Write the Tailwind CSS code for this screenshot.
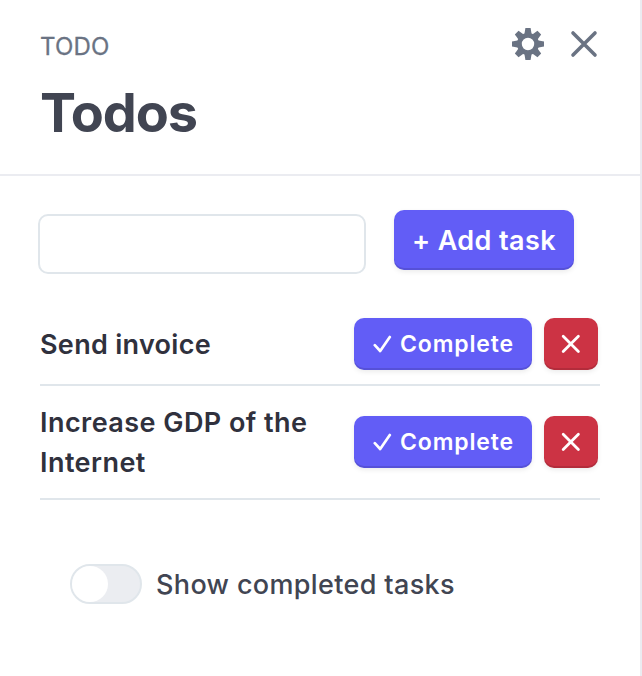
<!DOCTYPE html>
<html lang="en">
<head>
<meta charset="utf-8">
<title>Todos</title>
<script src="https://cdn.jsdelivr.net/npm/@tailwindcss/browser@4"></script>
</head>
<body class="bg-white">
<main class="h-[676px] w-[642px] overflow-hidden border-r-2 border-[#ebecf1] bg-white font-['Inter',sans-serif] text-[#30313d]">
  <header class="h-[176px] border-b-2 border-[#ebecf1] px-10 pt-[26px]">
    <div class="flex h-10 items-center justify-between">
      <p class="pt-px text-[24px] leading-10 tracking-[0.2px] text-[#6a7383] [-webkit-text-stroke:0.3px_#6a7383]">TODO</p>
      <div class="flex items-center gap-6">
        <svg class="-mt-1 size-9" viewBox="-18 -18 36 36" fill="#6a7383">
          <defs><path id="tooth" d="M-3.9-8 L-2.6-16 H2.6 L3.9-8Z"/></defs>
          <circle r="8.6" fill="none" stroke="#6a7383" stroke-width="4.8"/>
          <use href="#tooth"/><use href="#tooth" transform="rotate(45)"/><use href="#tooth" transform="rotate(90)"/><use href="#tooth" transform="rotate(135)"/><use href="#tooth" transform="rotate(180)"/><use href="#tooth" transform="rotate(225)"/><use href="#tooth" transform="rotate(270)"/><use href="#tooth" transform="rotate(315)"/>
        </svg>
        <svg class="-mt-1 mr-0.5 size-7" viewBox="0 0 28 28" fill="none" stroke="#6a7383" stroke-width="3.6" stroke-linecap="round"><path d="M3 3 25 25M25 3 3 25"/></svg>
      </div>
    </div>
    <h1 class="mt-[15px] text-[54px] leading-16 font-bold tracking-[-1.1px] text-[#414552]">Todos</h1>
  </header>

  <form class="flex items-start gap-7 pt-[34px] pl-[38px]">
    <input type="text" aria-label="New task" class="mt-1 h-[60px] w-[328px] rounded-[10px] border-2 border-[#e0e6eb] bg-white px-4 text-[28px] outline-none">
    <button type="button" class="h-[60px] w-[180px] rounded-[10px] bg-[#625df6] pt-0.5 text-[27px] font-semibold tracking-[0.4px] whitespace-nowrap text-white shadow-[inset_0_-2px_0_rgba(0,0,0,0.12),0_2px_5px_rgba(0,0,0,0.08)]">+ Add task</button>
  </form>

  <ul class="mt-[30px] px-10">
    <li class="flex h-[82px] items-center justify-between border-b-2 border-[#e0e6eb] pr-0.5">
      <span class="pt-0.5 text-[27px] leading-10 font-semibold tracking-[0.3px]">Send invoice</span>
      <div class="flex gap-3">
        <button class="flex h-[52px] w-[178px] items-center gap-2 rounded-[10px] bg-[#625df6] pl-[19px] text-[23px] font-semibold tracking-[0.85px] text-white shadow-[inset_0_-2px_0_rgba(0,0,0,0.12),0_2px_5px_rgba(0,0,0,0.08)]">
          <svg class="h-5 w-[19px]" viewBox="0 0 19 20" fill="none" stroke="white" stroke-width="2.7" stroke-linecap="round" stroke-linejoin="round"><path d="M1.8 11.2 7.2 17 16.8 3"/></svg>Complete</button>
        <button aria-label="Delete" class="flex h-[52px] w-[54px] items-center justify-center rounded-[10px] bg-[#cc3344] shadow-[inset_0_-2px_0_rgba(0,0,0,0.12),0_2px_5px_rgba(0,0,0,0.08)]">
          <svg class="size-5" viewBox="0 0 20 20" fill="none" stroke="white" stroke-width="2.8" stroke-linecap="round"><path d="M2.2 2.2 17.4 17.4M17.4 2.2 2.2 17.4"/></svg></button>
      </div>
    </li>
    <li class="flex h-[114px] items-center justify-between border-b-2 border-[#e0e6eb] pr-0.5">
      <span class="w-[300px] pt-0.5 text-[27px] leading-10 font-semibold tracking-[0.45px]">Increase GDP of the Internet</span>
      <div class="flex gap-3">
        <button class="flex h-[52px] w-[178px] items-center gap-2 rounded-[10px] bg-[#625df6] pl-[19px] text-[23px] font-semibold tracking-[0.85px] text-white shadow-[inset_0_-2px_0_rgba(0,0,0,0.12),0_2px_5px_rgba(0,0,0,0.08)]">
          <svg class="h-5 w-[19px]" viewBox="0 0 19 20" fill="none" stroke="white" stroke-width="2.7" stroke-linecap="round" stroke-linejoin="round"><path d="M1.8 11.2 7.2 17 16.8 3"/></svg>Complete</button>
        <button aria-label="Delete" class="flex h-[52px] w-[54px] items-center justify-center rounded-[10px] bg-[#cc3344] shadow-[inset_0_-2px_0_rgba(0,0,0,0.12),0_2px_5px_rgba(0,0,0,0.08)]">
          <svg class="size-5" viewBox="0 0 20 20" fill="none" stroke="white" stroke-width="2.8" stroke-linecap="round"><path d="M2.2 2.2 17.4 17.4M17.4 2.2 2.2 17.4"/></svg></button>
      </div>
    </li>
  </ul>

  <div class="mt-[63px] flex items-center gap-[14px] pl-[70px]">
    <button role="switch" aria-checked="false" aria-label="Show completed tasks" class="h-10 w-[72px] rounded-full border-2 border-[#e0e6eb] bg-[#ebedf1]"><span class="block size-9 rounded-full bg-white"></span></button>
    <span class="pt-0.5 text-[27px] leading-10 font-medium tracking-[0.35px] text-[#414552]">Show completed tasks</span>
  </div>
</main>
</body>
</html>
